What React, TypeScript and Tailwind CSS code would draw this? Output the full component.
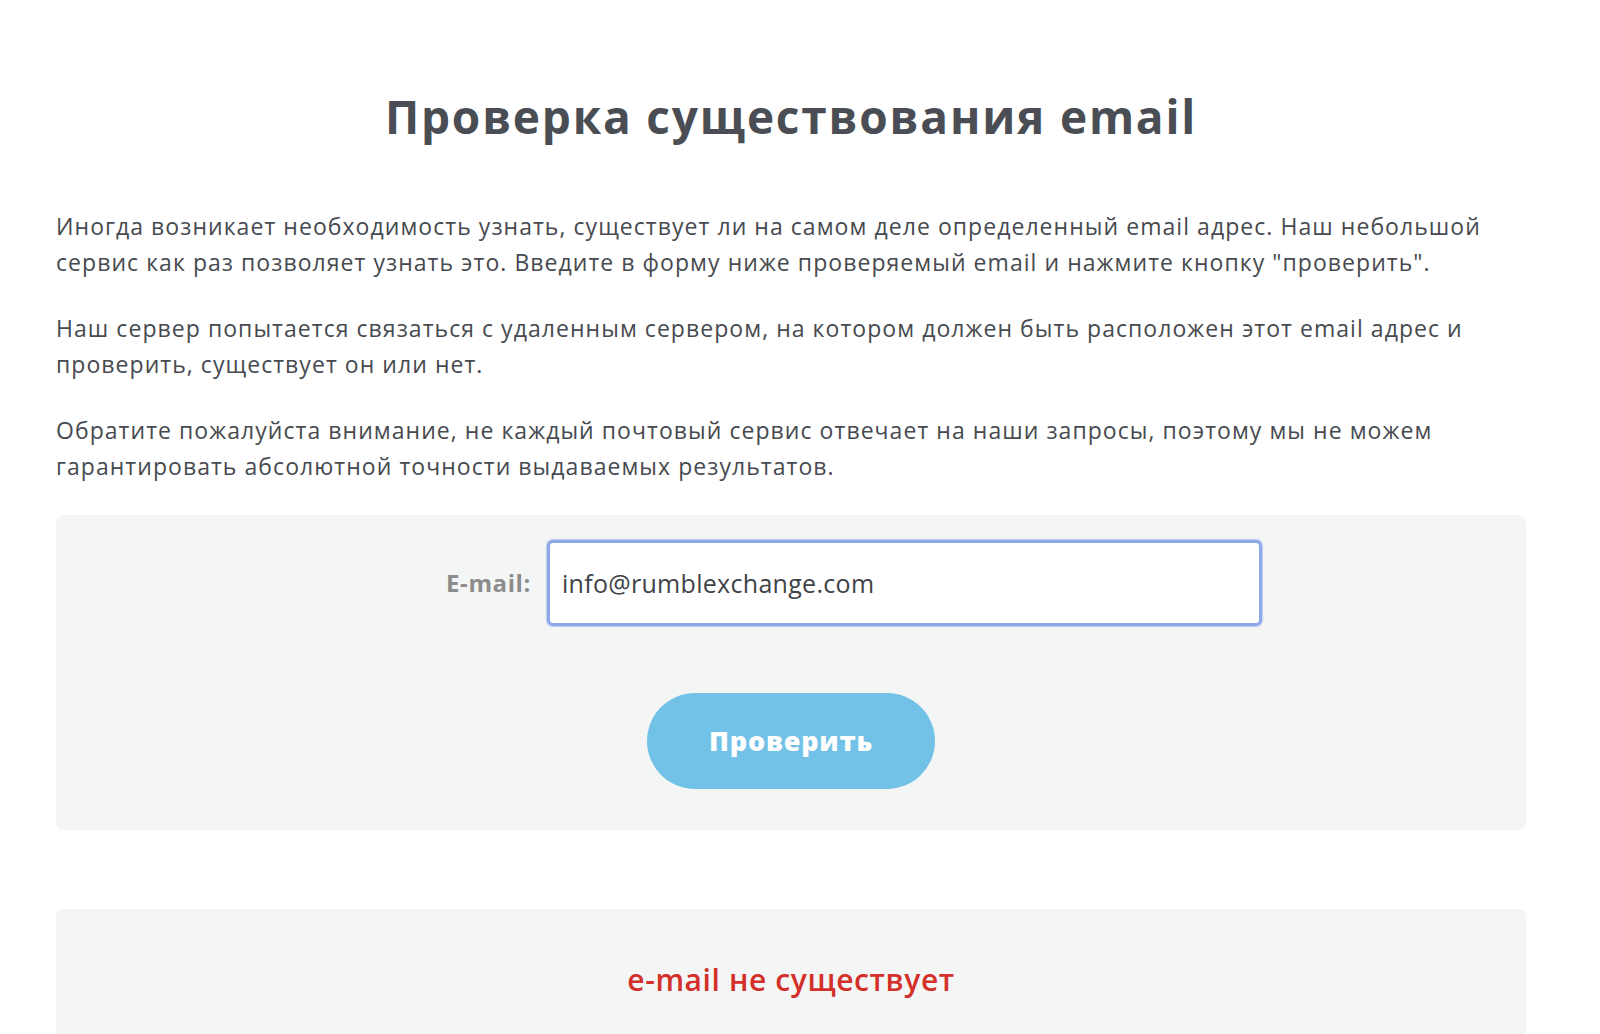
import { useState } from 'react'

export default function App() {
  const [email, setEmail] = useState('info@rumblexchange.com')

  return (
    <div className="min-h-screen bg-white font-['Open_Sans',sans-serif] text-[#474a4f]">
      <div className="ml-[56px] w-[1470px] pt-[88px]">
        <h1 className="text-center text-[46px] font-bold leading-[56px] tracking-[1.8px] text-[#4a4e54]">
          Проверка существования email
        </h1>

        {/* Intro text */}
        <div className="mt-[64px] flex flex-col gap-[30px] text-[23px] leading-[36px] tracking-[1.05px]">
          <p>
            Иногда возникает необходимость узнать, существует ли на самом деле определенный email адрес. Наш небольшой
            <br />
            сервис как раз позволяет узнать это. Введите в форму ниже проверяемый email и нажмите кнопку "проверить".
          </p>
          <p>
            Наш сервер попытается связаться с удаленным сервером, на котором должен быть расположен этот email адрес и
            <br />
            проверить, существует он или нет.
          </p>
          <p>
            Обратите пожалуйста внимание, не каждый почтовый сервис отвечает на наши запросы, поэтому мы не можем
            <br />
            гарантировать абсолютной точности выдаваемых результатов.
          </p>
        </div>

        {/* Form */}
        <form
          className="mt-[31px] flex flex-col items-center rounded-lg bg-[#f4f5f5] pt-[25px] pb-[41px]"
          onSubmit={(e) => e.preventDefault()}
        >
          <div className="ml-[126px] flex items-center gap-[16px]">
            <label className="text-right text-[24px] font-bold tracking-[0.6px] text-[#8c8c8c]">E-mail:</label>
            <input
              value={email}
              onChange={(e) => setEmail(e.target.value)}
              className="h-[86px] w-[715px] rounded-md border-[3px] border-[#8ea7e9] bg-white px-[12px] text-[25px] tracking-[0.3px] text-[#3f4247] shadow-[0_0_1px_1px_rgba(142,167,233,0.5)] outline-none"
            />
          </div>
          <button
            type="submit"
            className="mt-[67px] h-[96px] w-[288px] rounded-full bg-[#72c1e6] text-[27px] font-extrabold tracking-[0.8px] text-white"
          >
            Проверить
          </button>
        </form>

        {/* Result */}
        <div className="mt-[79px] flex h-[140px] justify-center rounded-t-lg bg-[#f4f5f5] pt-[48px]">
          <span className="text-[30px] font-semibold tracking-[0.6px] text-[#d3302a]">e-mail не существует</span>
        </div>
      </div>
    </div>
  )
}
